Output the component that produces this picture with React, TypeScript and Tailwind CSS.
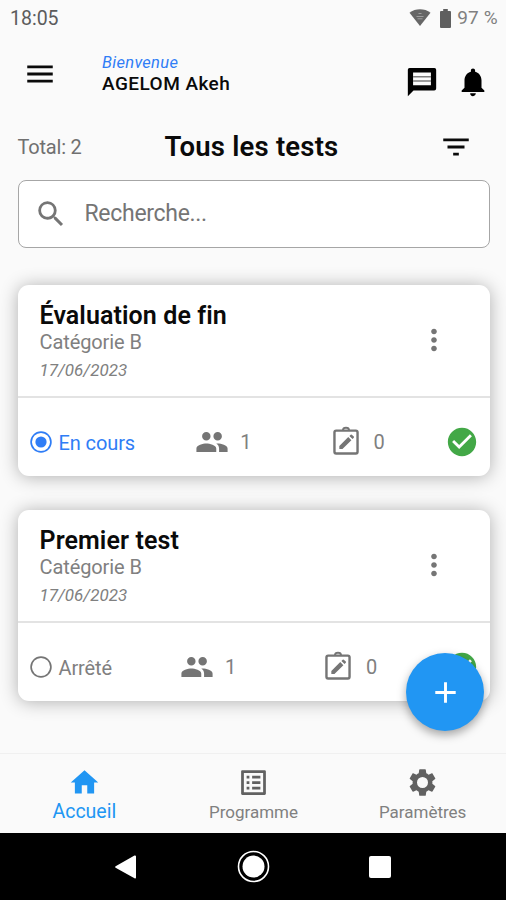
import React from 'react';
import {
  MdAdd,
  MdCheckCircle,
  MdFilterList,
  MdHome,
  MdMenu,
  MdMoreVert,
  MdNotifications,
  MdOutlineListAlt,
  MdPeople,
  MdSearch
} from 'react-icons/md';

interface Test {
  id: number;
  titre: string;
  categorie: string;
  date: string;
  enCours: boolean;
  participants: number;
  copies: number;
}

const tests: Test[] = [
  {
    id: 1,
    titre: 'Évaluation de fin',
    categorie: 'Catégorie B',
    date: '17/06/2023',
    enCours: true,
    participants: 1,
    copies: 0
  },
  {
    id: 2,
    titre: 'Premier test',
    categorie: 'Catégorie B',
    date: '17/06/2023',
    enCours: false,
    participants: 1,
    copies: 0
  }
];

function WifiIcon() {
  return (
    <svg width="22" height="18" viewBox="0 0 22 18">
      <path d="M11 17 0.500 3.700C6.500-0.800 15.500-0.800 21.500 3.700Z" fill="#666666" />
      <path d="M9.500 4.500h3M7.500 7.500h7M8.500 9.800h5" stroke="#9e9e9e" strokeWidth="1" />
    </svg>
  );
}

function BatteryIcon() {
  return (
    <svg width="11" height="19" viewBox="0 0 11 19">
      <path d="M3.200 0h4.600v2H10a1 1 0 0 1 1 1v15a1 1 0 0 1-1 1H1a1 1 0 0 1-1-1V3a1 1 0 0 1 1-1h2.200Z" fill="#5f5f5f" />
    </svg>
  );
}

function MessageIcon() {
  return (
    <svg className="mt-[29px]" width="34" height="34" viewBox="0 0 24 24">
      <path d="M3.200 2.200h17.600a1.200 1.200 0 0 1 1.200 1.200v13.200a1.400 1.400 0 0 1-1.400 1.400H6l-4 4V3.400a1.200 1.200 0 0 1 1.200-1.200Z" fill="black" />
      <path d="M5.700 5.300h12.600v9H5.700Z" fill="#fafafa" />
      <path d="M5.700 8.300h12.600M5.700 11.300h12.600" stroke="#7d7d7d" strokeWidth=".9" />
    </svg>
  );
}

function ClipboardEditIcon() {
  return (
    <svg width="34" height="34" viewBox="0 0 24 24" fill="none" stroke="#757575">
      <rect x="3.850" y="3.950" width="16.300" height="16.200" rx="1.200" strokeWidth="1.700" />
      <path d="M9.900 3.600a2.100 1.700 0 0 1 4.200 0" strokeWidth="1.400" />
      <path d="M7.300 17v-2.200l6.300-6.300 2.200 2.200L9.500 17ZM14.400 7.700l.9-.9a.6.6 0 0 1 .8 0l1.400 1.400a.6.6 0 0 1 0 .8l-.9.9Z" fill="#757575" stroke="none" />
    </svg>
  );
}

function SettingsIcon() {
  return (
    <svg width="33" height="33" viewBox="0 0 24 24" fill="#616161" fillRule="evenodd">
      <path d="M19.140 12.940c.04-.3.06-.61.06-.94 0-.32-.02-.64-.07-.94l2.030-1.580c.18-.14.23-.41.12-.61l-1.920-3.320c-.12-.22-.37-.29-.59-.22l-2.390.96c-.5-.38-1.030-.7-1.620-.94l-.36-2.540c-.04-.24-.24-.41-.48-.41h-3.840c-.24 0-.43.17-.47.41l-.36 2.540c-.59.24-1.130.57-1.620.94l-2.390-.96c-.22-.08-.47 0-.59.22L2.740 8.870c-.12.21-.08.47.12.61l2.030 1.580c-.05.3-.09.63-.09.94s.02.64.07.94l-2.030 1.580c-.18.14-.23.41-.12.61l1.920 3.320c.12.22.37.29.59.22l2.390-.96c.5.38 1.030.7 1.620.94l.36 2.540c.05.24.24.41.48.41h3.840c.24 0 .44-.17.47-.41l.36-2.540c.59-.24 1.130-.56 1.620-.94l2.390.96c.22.08.47 0 .59-.22l1.920-3.320c.12-.22.07-.47-.12-.61zM12 16a4 4 0 1 1 0-8 4 4 0 0 1 0 8Z" />
    </svg>
  );
}

function StatusRadio({ checked }: { checked: boolean }) {
  return (
    <svg width="22" height="22" viewBox="0 0 22 22" className={checked ? 'text-[#2f7df6]' : 'text-[#757575]'}>
      <circle cx="11" cy="11" r="9.900" fill="none" stroke="currentColor" strokeWidth="1.700" />
      {checked && <circle cx="11" cy="11" r="5.600" fill="currentColor" />}
    </svg>
  );
}

function StatusBar() {
  return (
    <div className="flex h-9 items-center justify-between pl-[10px] pr-2 text-[#5c5c5c]">
      <span className="pt-[2px] text-[19.500px]">18:05</span>
      <div className="flex items-center">
        <WifiIcon />
        <span className="ml-[9px]">
          <BatteryIcon />
        </span>
        <span className="ml-[6px] pt-px text-[19px] tracking-[0.200px] text-[#808080]">97 %</span>
      </div>
    </div>
  );
}

function Header() {
  return (
    <header className="flex h-20 items-start pl-[23px] pr-4">
      <MdMenu className="mt-[21px] size-[34px]" />
      <div className="ml-[45px] mt-4 flex-1">
        <p className="text-[16.500px] leading-[21px] italic tracking-[0.300px] text-[#2f7df6]">Bienvenue</p>
        <p className="text-[19px] leading-[22px] font-medium tracking-[0.450px]">AGELOM Akeh</p>
      </div>
      <MessageIcon />
      <MdNotifications className="ml-[17px] mt-[29px] size-[34px] text-black" />
    </header>
  );
}

function TestCard({ test }: { test: Test }) {
  return (
    <article className="flex h-[191px] flex-col rounded-[11px] bg-white shadow-[0_1px_18px_rgba(0,0,0,0.3)]">
      <div className="flex h-[113px] items-center justify-between border-b-2 border-[#e3e3e3] pl-[22px] pr-[39px]">
        <div className="pt-[3px]">
          <h2 className="text-[25px] leading-[28px] font-semibold tracking-[0.100px]">{test.titre}</h2>
          <p className="text-[20px] leading-6 tracking-[-0.100px] text-[#808080]">{test.categorie}</p>
          <p className="mt-1 text-[17px] leading-6 italic text-[#808080]">{test.date}</p>
        </div>
        <MdMoreVert className="size-[34px] text-[#757575]" />
      </div>
      <div className="flex flex-1 items-center justify-between pb-[6px] pl-[12px] pr-[11px] pt-[16px] text-[20px] text-[#808080]">
        <div className="flex items-center gap-[7px]">
          <StatusRadio checked={test.enCours} />
          <span className={test.enCours ? 'pt-[3px] tracking-[-0.100px] text-[#2f7df6]' : 'pt-[3px] tracking-[-0.100px]'}>
            {test.enCours ? 'En cours' : 'Arrêté'}
          </span>
        </div>
        <div className="flex items-center gap-[11px] pr-[17px]">
          <MdPeople className="size-[34px] text-[#757575]" />
          <span>{test.participants}</span>
        </div>
        <div className="flex items-center gap-[11px]">
          <ClipboardEditIcon />
          <span>{test.copies}</span>
        </div>
        <MdCheckCircle className="size-[34px] text-[#43a847]" />
      </div>
    </article>
  );
}

function TabBar() {
  return (
    <nav className="grid h-20 grid-cols-3 border-t border-[#f0f0f0] bg-[#fafafa] text-[17px] text-[#808080]">
      <div className="flex flex-col items-center pt-3">
        <MdHome className="size-[33px] text-[#2196f3]" />
        <span className="pt-px text-[19.500px] leading-6 text-[#2196f3]">Accueil</span>
      </div>
      <div className="flex flex-col items-center pl-px pt-3">
        <MdOutlineListAlt className="size-[33px] text-[#616161]" />
        <span className="leading-[26px]">Programme</span>
      </div>
      <div className="flex flex-col items-center pl-[2px] pt-3">
        <SettingsIcon />
        <span className="leading-[26px]">Paramètres</span>
      </div>
    </nav>
  );
}

function SystemNav() {
  return (
    <div className="flex h-[67px] items-center bg-black pl-[115px]">
      <svg width="22" height="24" viewBox="0 0 22 24" fill="white">
        <path d="M20 .5a1 1 0 0 1 1 1v21a1 1 0 0 1-1.500.8L.6 12.700a.8.8 0 0 1 0-1.400L19.500.6Z" />
      </svg>
      <svg className="ml-[100px]" width="33" height="33" viewBox="0 0 33 33">
        <circle cx="16.500" cy="16.500" r="15" fill="none" stroke="white" strokeWidth="1.600" />
        <circle cx="16.500" cy="16.500" r="11" fill="white" />
      </svg>
      <div className="ml-[99px] size-[22px] rounded-[2px] bg-white" />
    </div>
  );
}

export default function App() {
  return (
    <div className="relative flex h-[900px] w-[506px] flex-col overflow-hidden bg-[#fafafa] font-['Roboto',sans-serif] text-[#0a0a0a]">
      <StatusBar />
      <Header />

      <main className="flex-1 pl-[17.500px] pr-4">
        <div className="flex h-16 items-center pb-[2px] pr-[17px]">
          <span className="w-[147px] text-[20px] tracking-[-0.200px] text-[#707070]">Total: 2</span>
          <h1 className="flex-1 text-[27.500px] font-semibold tracking-[0.200px]">Tous les tests</h1>
          <MdFilterList className="size-[34px]" />
        </div>

        <div className="flex h-[68px] items-center rounded-[8px] border border-[#a6a6a6] bg-white pl-[15px]">
          <MdSearch className="size-[34px] text-[#757575]" />
          <span className="ml-[17px] pt-px text-[23px] tracking-[-0.300px] text-[#757575]">Recherche...</span>
        </div>

        <div className="mt-[36.500px] flex flex-col gap-[34px]">
          {tests.map((test) => (
            <TestCard key={test.id} test={test} />
          ))}
        </div>
      </main>

      {/* Floating add button */}
      <button className="absolute left-[406px] top-[653px] flex size-[78px] items-center justify-center rounded-full bg-[#2196f3] text-white shadow-[0_4px_10px_rgba(0,0,0,0.35)]">
        <MdAdd className="size-[35px]" />
      </button>

      <TabBar />
      <SystemNav />
    </div>
  );
}
